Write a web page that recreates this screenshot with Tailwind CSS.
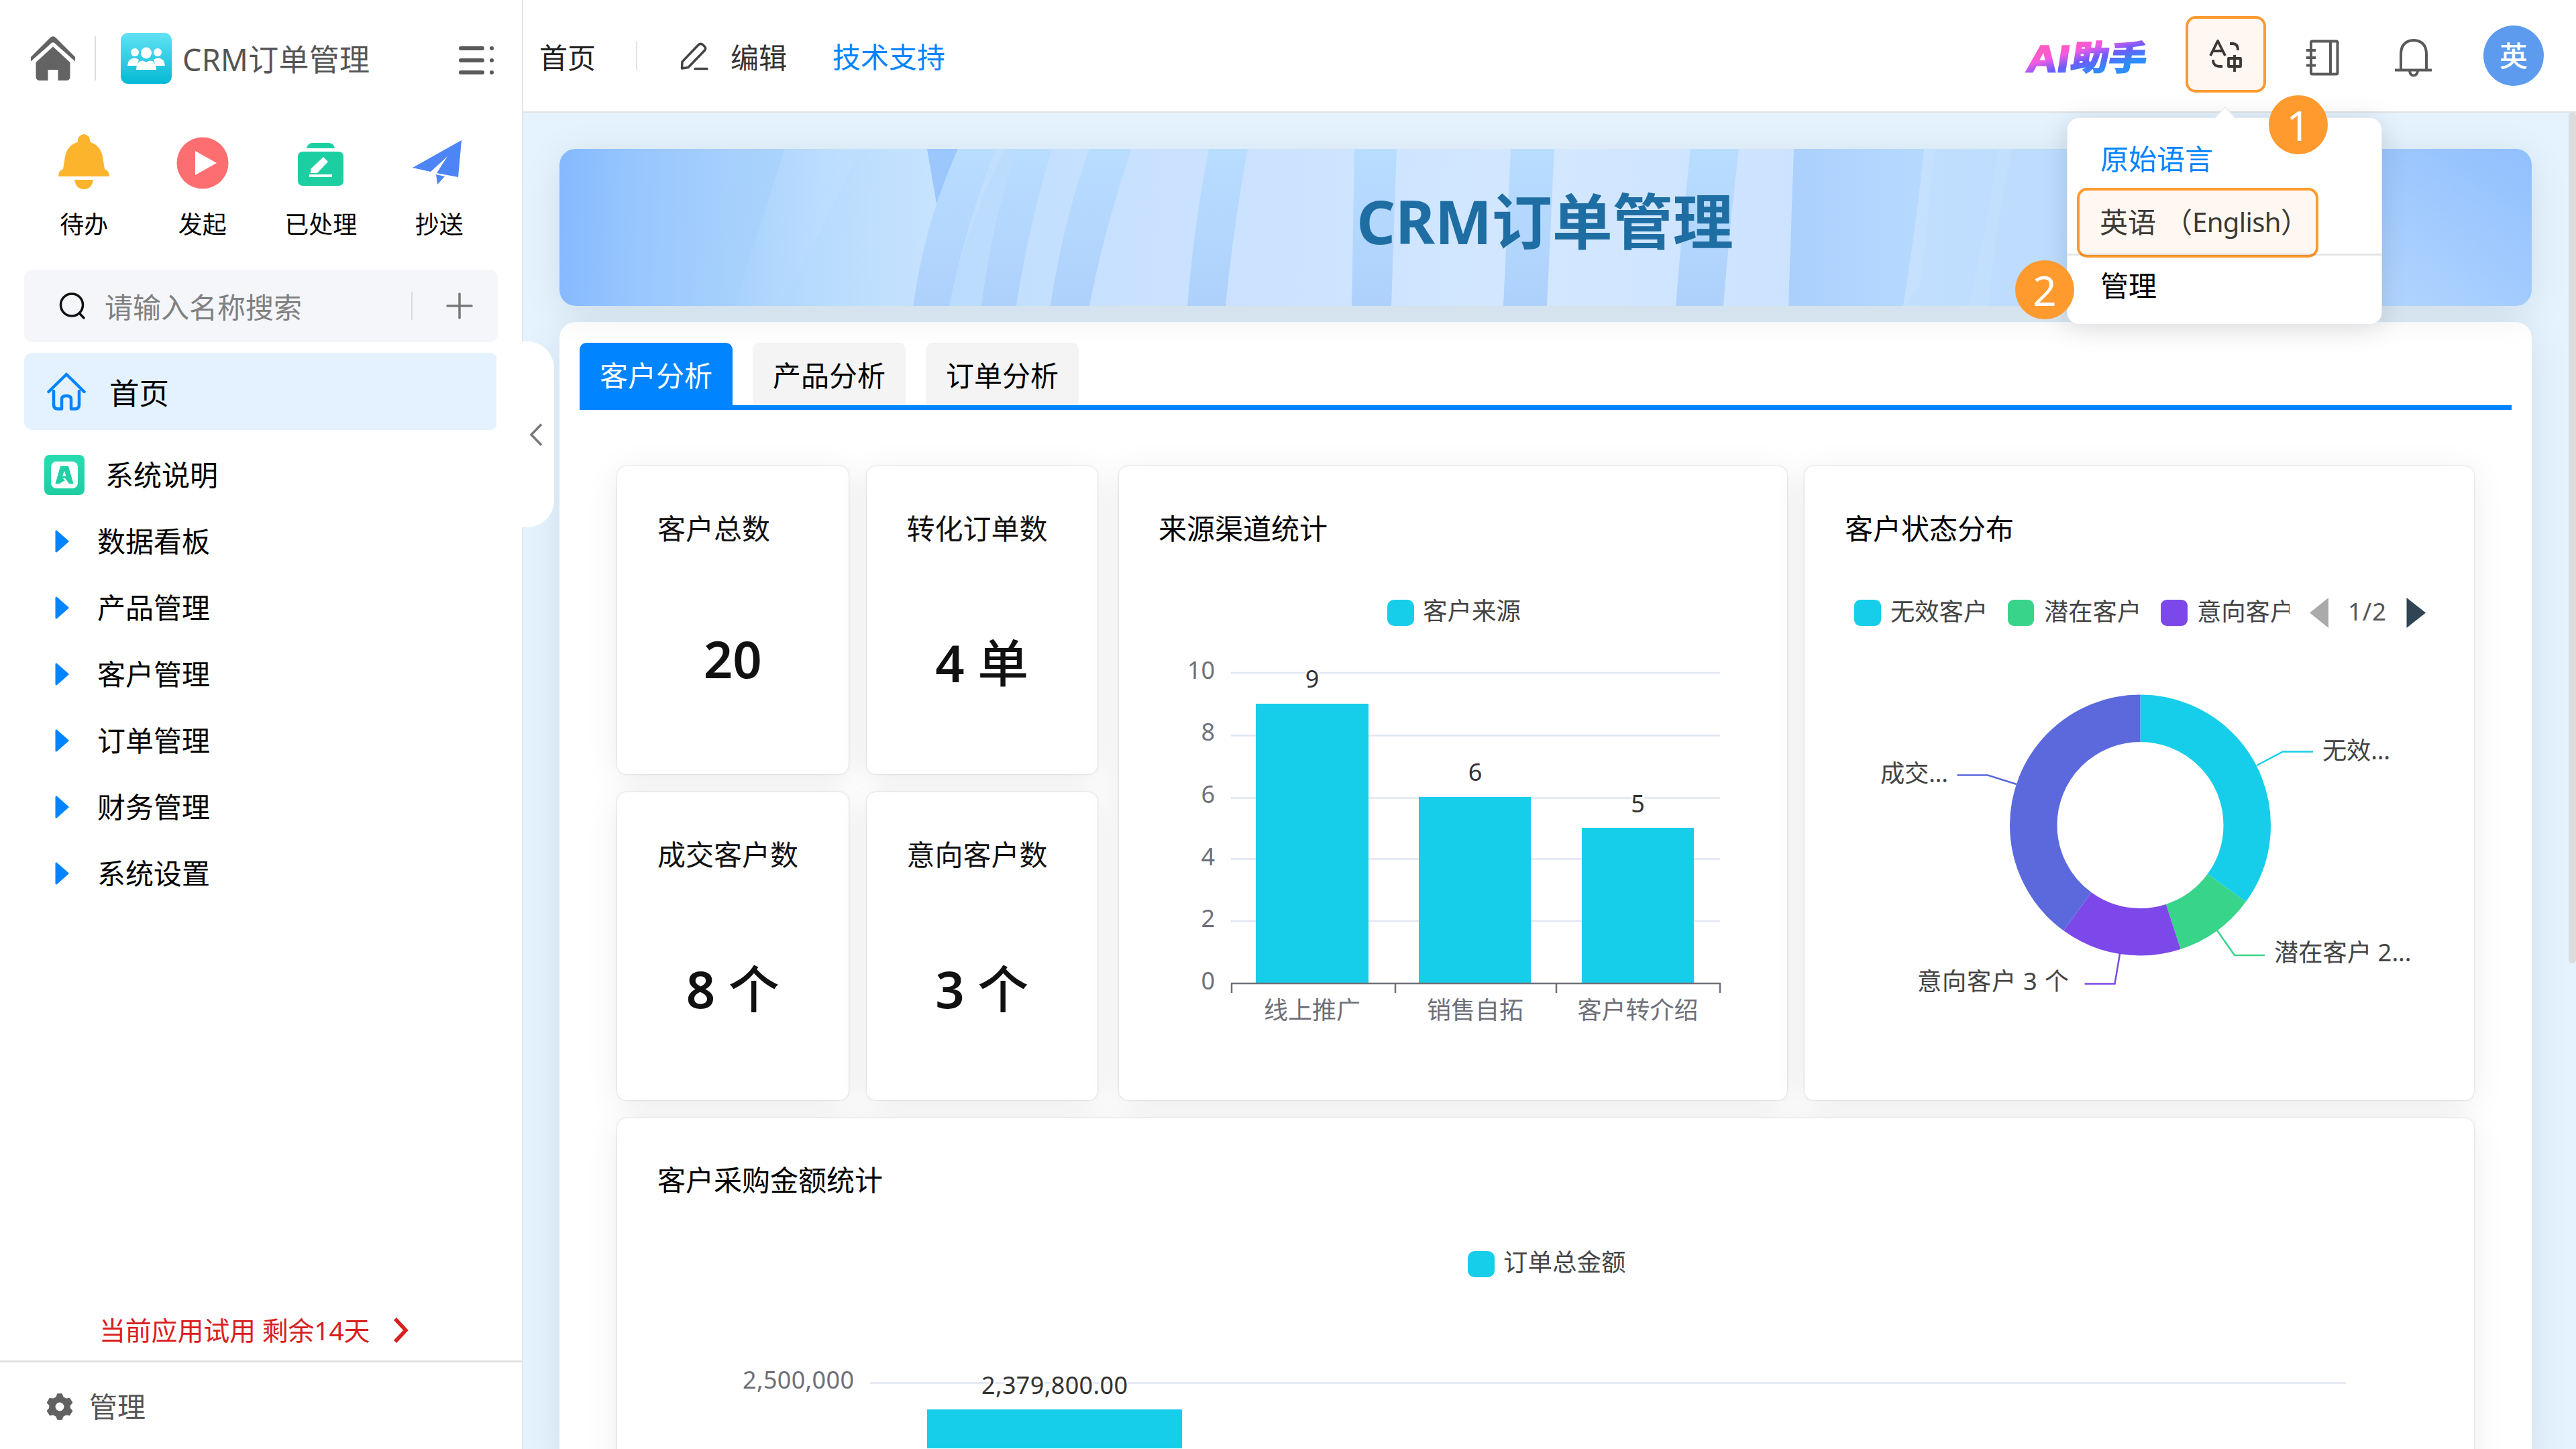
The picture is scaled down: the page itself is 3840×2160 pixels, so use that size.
<!DOCTYPE html>
<html lang="zh-CN">
<head>
<meta charset="utf-8">
<title>CRM订单管理</title>
<script src="https://cdn.jsdelivr.net/npm/@tailwindcss/browser@4"></script>
</head>
<body class="relative flex w-[3840px] h-[2160px] overflow-hidden bg-white text-[42px] leading-[56px] text-black font-['Noto_Sans','Noto_Sans_CJK_SC',sans-serif]">

<!-- Sidebar -->
<aside class="relative z-10 flex flex-col shrink-0 w-[780px] h-full bg-white border-r-2 border-[#e4e4e4]">
  <div class="flex items-center h-[168px] pt-[6px] pl-[46px] pr-[42px] shrink-0">
    <svg class="w-[66px] h-[66px]" viewBox="0 0 66 66"><path d="M0 37.500V31L28.500 2.500Q33 -2 37.500 2.500L66 31V37.500L35 10Q33 8.500 31 10Z" fill="#636363"/><path d="M33 15.500 58.500 39V60Q58.500 66 52.500 66H40.500V50H25.500V66H13.500Q7.500 66 7.500 60V39Z" fill="#636363"/></svg>
    <div class="w-[2px] h-[66px] ml-[29px] bg-[#dcdcdc]"></div>
    <svg class="w-[76px] h-[76px] ml-[37px]" viewBox="0 0 76 76"><defs><linearGradient id="lg" x1="0" y1="0" x2="0" y2="1"><stop offset="0" stop-color="#62e2f4"/><stop offset="1" stop-color="#05b9d4"/></linearGradient></defs><rect width="76" height="76" rx="11" fill="url(#lg)"/><g fill="#fff"><circle cx="21" cy="29" r="6"/><circle cx="55" cy="29" r="6"/><ellipse cx="38" cy="30" rx="8" ry="8.500"/><path d="M10 49Q11 38 20 37.500 24 37.500 27 40L24 49ZM66 49Q65 38 56 37.500 52 37.500 49 40L52 49Z"/><path d="M23 55Q24 41 33 41.500L38 43.500 43 41.500Q52 41 53 55Z"/></g></svg>
    <div class="ml-[16px] mt-[4px] text-[45px] tracking-[0.3px] text-[#555]">CRM订单管理</div>
    <svg class="w-[52px] h-[44px] ml-auto mt-[6px]" viewBox="0 0 52 44" stroke="#5a5a5a" stroke-width="6" stroke-linecap="round"><path d="M3 4H35M3 22H35M3 40H35M49 4h.1M49 22h.1M49 40h.1"/></svg>
  </div>

  <div class="grid grid-cols-4 w-[706px] ml-[37px] mt-[32px] shrink-0 text-[36px] leading-[42px] text-center">
    <div class="flex flex-col items-center gap-[30px]">
      <svg class="w-[84px] h-[84px]" viewBox="0 0 84 84" fill="#fbb42c"><path d="M42 0Q51 1 51.500 12 69 17 71 40L73 52Q80 55 80 63H4Q4 55 11 52L13 40Q15 17 32.500 12 33 1 42 0ZM28 68H56Q54 82 42 82 30 82 28 68Z"/></svg>
      <div>待办</div>
    </div>
    <div class="flex flex-col items-center gap-[30px]">
      <svg class="w-[84px] h-[84px]" viewBox="0 0 84 84"><circle cx="42" cy="43" r="38.500" fill="#fd6e70"/><path d="M31 25V61L63 43Z" fill="#fff"/></svg>
      <div>发起</div>
    </div>
    <div class="flex flex-col items-center gap-[30px]">
      <svg class="w-[84px] h-[84px]" viewBox="0 0 84 84"><path d="M21 21Q23 13 30 13H54Q61 13 63 21ZM16 26H68Q76 26 76 34V69Q76 77 68 77H16Q8 77 8 69V34Q8 26 16 26Z" fill="#1ccfa2"/><path d="M46 34 53 41 37 58H27V52ZM25 60H59V64H25Z" fill="#fff"/></svg>
      <div>已处理</div>
    </div>
    <div class="flex flex-col items-center gap-[30px]">
      <svg class="w-[84px] h-[84px]" viewBox="0 0 84 84" fill="#4d85f7"><path d="M75 9 2 50 29 56 54 33 38 58 70 64ZM37 60 50 63 39 75Z"/></svg>
      <div>抄送</div>
    </div>
  </div>

  <div class="flex items-center w-[706px] h-[108px] ml-[36px] mt-[46px] pl-[51px] pr-[37px] shrink-0 rounded-[12px] bg-[#f4f6fa]">
    <svg class="w-[42px] h-[42px]" viewBox="0 0 42 42" fill="none" stroke="#111" stroke-width="3.500"><circle cx="20" cy="19.500" r="16.500"/><path d="M31 31.500 38 39" stroke-linecap="round"/></svg>
    <div class="ml-[27px] mt-[3px] text-[42px] text-[#808080]">请输入名称搜索</div>
    <div class="w-[2px] h-[42px] ml-auto bg-[#dcdcdc]"></div>
    <svg class="w-[40px] h-[40px] ml-[50px]" viewBox="0 0 40 40" stroke="#777" stroke-width="3.500" stroke-linecap="round"><path d="M2 20H38M20 2V38"/></svg>
  </div>

  <div class="flex items-center w-[706px] h-[115px] ml-[36px] mt-[16px] pl-[34px] shrink-0 rounded-[12px] bg-[#e3f2fe]">
    <svg class="w-[58px] h-[58px]" viewBox="0 0 58 58" fill="none" stroke="#0084ff" stroke-width="4.500" stroke-linecap="round" stroke-linejoin="round"><path d="M2.500 29 29 3 55.500 29M10 28V48Q10 54.500 16 54.500H22V40Q22 35 29 35 36 35 36 40V54.500H42Q48 54.500 48 48V28"/></svg>
    <div class="ml-[35px] mt-[5px] text-[44.500px]">首页</div>
  </div>

  <nav class="flex flex-col mt-[17px] shrink-0">
    <div class="flex items-center h-[99px] pl-[66px]">
      <svg class="w-[60px] h-[60px]" viewBox="0 0 60 60"><defs><linearGradient id="ag" x1="0" y1="0" x2="0" y2="1"><stop offset="0" stop-color="#28dcb0"/><stop offset="1" stop-color="#1fcda4"/></linearGradient></defs><rect width="60" height="60" rx="8" fill="url(#ag)"/><rect x="10" y="10" width="40" height="40" rx="8" fill="#fff"/><path d="M24 17H36L43.500 43H37L31 35H27.500L31 38 22.500 43H16.500ZM30 24 27 32H32.500Z" fill="#1fd0a5"/></svg>
      <div class="ml-[31px]">系统说明</div>
    </div>
    <div class="flex items-center h-[99px] pl-[82px] gap-[42px]"><svg class="w-[21px] h-[34px]" viewBox="0 0 21 34"><path d="M2 2 19 17 2 32Z" fill="#0084ff" stroke="#0084ff" stroke-width="3" stroke-linejoin="round"/></svg><div>数据看板</div></div>
    <div class="flex items-center h-[99px] pl-[82px] gap-[42px]"><svg class="w-[21px] h-[34px]" viewBox="0 0 21 34"><path d="M2 2 19 17 2 32Z" fill="#0084ff" stroke="#0084ff" stroke-width="3" stroke-linejoin="round"/></svg><div>产品管理</div></div>
    <div class="flex items-center h-[99px] pl-[82px] gap-[42px]"><svg class="w-[21px] h-[34px]" viewBox="0 0 21 34"><path d="M2 2 19 17 2 32Z" fill="#0084ff" stroke="#0084ff" stroke-width="3" stroke-linejoin="round"/></svg><div>客户管理</div></div>
    <div class="flex items-center h-[99px] pl-[82px] gap-[42px]"><svg class="w-[21px] h-[34px]" viewBox="0 0 21 34"><path d="M2 2 19 17 2 32Z" fill="#0084ff" stroke="#0084ff" stroke-width="3" stroke-linejoin="round"/></svg><div>订单管理</div></div>
    <div class="flex items-center h-[99px] pl-[82px] gap-[42px]"><svg class="w-[21px] h-[34px]" viewBox="0 0 21 34"><path d="M2 2 19 17 2 32Z" fill="#0084ff" stroke="#0084ff" stroke-width="3" stroke-linejoin="round"/></svg><div>财务管理</div></div>
    <div class="flex items-center h-[99px] pl-[82px] gap-[42px]"><svg class="w-[21px] h-[34px]" viewBox="0 0 21 34"><path d="M2 2 19 17 2 32Z" fill="#0084ff" stroke="#0084ff" stroke-width="3" stroke-linejoin="round"/></svg><div>系统设置</div></div>
  </nav>

  <div class="flex items-center h-[90px] mt-auto pl-[148px] pb-[1px] text-[39px] text-[#d9201f]">
    <div class="w-[404px] whitespace-nowrap tracking-[-0.2px]">当前应用试用 剩余14天</div>
    <svg class="w-[24px] h-[38px] ml-[34px]" viewBox="0 0 24 38" fill="none" stroke="#d9201f" stroke-width="5.500"><path d="M3 2 19 19 3 36"/></svg>
  </div>
  <div class="flex items-center h-[132px] pl-[69px] pt-[3px] shrink-0 border-t-3 border-[#e0e0e0] text-[#555]">
    <svg class="w-[40px] h-[40px]" viewBox="0 0 40 40"><path fill-rule="evenodd" fill="#616161" stroke="#616161" stroke-width="1.500" stroke-linejoin="round" d="M17 1H23L25 6 29.500 8.500 34.500 7.500 38.500 14 35 17.800V22.200L38.500 26 34.500 32.500 29.500 31.500 25 34 23 39H17L15 34 10.500 31.500 5.500 32.500 1.500 26 5 22.200V17.800L1.500 14 5.500 7.500 10.500 8.500 15 6ZM20 12.800A7.200 7.200 0 1 0 20 27.200 7.200 7.200 0 1 0 20 12.800Z"/></svg>
    <div class="ml-[24px]">管理</div>
  </div>

  <!-- Collapse handle -->
  <div class="absolute left-[740px] top-[509px] flex items-center justify-end w-[86px] h-[277px] pr-[17px] rounded-r-[40px] bg-white">
    <svg class="w-[20px] h-[34px]" viewBox="0 0 20 34" fill="none" stroke="#777" stroke-width="3.500"><path d="M18 1.500 3 17 18 32.500"/></svg>
  </div>
</aside>

<div class="flex flex-col w-[3060px] h-full">
  <!-- Top bar -->
  <header class="flex items-center justify-between h-[168px] pl-[24px] pr-[48px] shrink-0 border-b-2 border-[#e2e2e2] bg-white">
    <div class="flex items-center pt-[6px]">
      <div class="text-[#222]">首页</div>
      <div class="w-[2px] h-[42px] ml-[60px] mb-[6px] bg-[#e2e2ea]"></div>
      <svg class="w-[42px] h-[42px] ml-[64px] mb-[4px]" viewBox="0 0 42 42" fill="none" stroke="#444" stroke-width="3.500" stroke-linejoin="round" stroke-linecap="round"><path d="M27 4Q30 1 33.500 3.500L36 6Q39 9 36.500 12L12 37.500 2.500 39 3 29ZM22 39.500H40"/></svg>
      <div class="ml-[33px] text-[#333]">编辑</div>
      <div class="ml-[68px] mb-[3px] text-[#0084ff]">技术支持</div>
    </div>
    <div class="flex items-center">
      <svg class="w-[200px] h-[80px] mt-[10px] overflow-visible" viewBox="3008 48 200 80"><defs><linearGradient id="ai" gradientUnits="userSpaceOnUse" x1="74" y1="-42" x2="88" y2="5"><stop offset="0" stop-color="#ff5ac6"/><stop offset=".2" stop-color="#f25ae4"/><stop offset=".58" stop-color="#6a5cff"/><stop offset="1" stop-color="#2e8dff"/></linearGradient></defs><g transform="translate(3019 107) skewX(-9)" fill="url(#ai)" stroke="url(#ai)" stroke-width="2.500" font-weight="700"><text x="0" y="0" font-size="56" font-family="Liberation Sans, sans-serif" textLength="63" lengthAdjust="spacingAndGlyphs">AI</text><text x="66" y="-3" font-size="50" stroke-width="2.500" textLength="112" lengthAdjust="spacingAndGlyphs">助手</text></g></svg>
      <div class="flex items-center justify-center w-[120px] h-[114px] ml-[50px] mb-[4px] rounded-[15px] border-4 border-[#ff9a2e] bg-[#fff8f2]">
        <svg class="w-[50px] h-[50px] mt-[3px]" viewBox="0 0 50 50" fill="none" stroke="#3c3733" stroke-width="3.800" stroke-linejoin="round"><path d="M2 25 13 3 24 25M6 18H20M31 7H35Q43 7 43 17M6 31Q6 41 16 41H20M29 29H47V41H29ZM38 24V49"/></svg>
      </div>
      <svg class="w-[60px] h-[60px] ml-[54px] mt-[5px]" viewBox="0 0 60 60" fill="none" stroke="#5a5a5a" stroke-width="4"><path d="M13 12V7.500Q13 5.500 15 5.500H50.500Q52.500 5.500 52.500 7.500V52.500Q52.500 54.500 50.500 54.500H15Q13 54.500 13 52.500V12M42 6V54M6 19H20M6 30H20M6 41.500H20"/></svg>
      <svg class="w-[60px] h-[60px] ml-[75px] mt-[5px]" viewBox="0 0 60 60" fill="none" stroke="#5a5a5a" stroke-width="4"><path d="M12 48V25Q12 5 31 4 50 5 50 25V48M3 48.500H58M25 50Q26 56.500 31 56.500 36 56.500 37 50"/></svg>
      <div class="flex items-center justify-center w-[90px] h-[90px] ml-[75px] rounded-full bg-[#5c9bee] text-[42px] font-medium text-white">英</div>
    </div>
  </header>

  <!-- Page body -->
  <main class="flex flex-col gap-[24px] h-[1992px] pl-[54px] pr-[66px] pt-[54px] overflow-hidden bg-[#e4f3fe]">
    <div class="relative flex items-center justify-center h-[234px] shrink-0 rounded-[24px] shadow-[0_10px_60px_rgba(0,0,0,0.09)]">
      <svg class="absolute inset-0 w-full h-full rounded-[24px]" viewBox="0 0 2940 234" preserveAspectRatio="none">
        <defs>
          <linearGradient id="bb" gradientUnits="userSpaceOnUse" x1="0" y1="0" x2="2940" y2="90"><stop offset="0" stop-color="#84b9fe"/><stop offset=".035" stop-color="#96c5fe"/><stop offset=".08" stop-color="#a4cefd"/><stop offset=".13" stop-color="#b4dafd"/><stop offset=".18" stop-color="#bedefe"/><stop offset=".3" stop-color="#c9e1ff"/><stop offset=".5" stop-color="#d3e7ff"/><stop offset=".62" stop-color="#cde3ff"/><stop offset=".7" stop-color="#c0defe"/><stop offset=".88" stop-color="#b5d7fe"/><stop offset="1" stop-color="#a9d0ff"/></linearGradient>
          <linearGradient id="bs" x1="0" y1="0" x2="0" y2="1"><stop offset="0" stop-color="#b9ddff"/><stop offset="1" stop-color="#aed1fc"/></linearGradient>
          <linearGradient id="bl" x1="0" x2="1"><stop offset="0" stop-color="#bcdffd" stop-opacity="0"/><stop offset="1" stop-color="#c8e4ff" stop-opacity=".8"/></linearGradient>
          <linearGradient id="bm" x1="0" x2="1"><stop offset="0" stop-color="#bcdcff" stop-opacity="0"/><stop offset="1" stop-color="#c3e1ff" stop-opacity=".7"/></linearGradient>
          <linearGradient id="bc" x1="1" y1="0" x2=".4" y2="1"><stop offset="0" stop-color="#8cbcfd" stop-opacity=".8"/><stop offset="1" stop-color="#8cbcfd" stop-opacity="0"/></linearGradient>
          <linearGradient id="br"><stop offset="0" stop-color="#abd0fd"/><stop offset="1" stop-color="#b6d9ff"/></linearGradient>
        </defs>
        <rect width="2940" height="234" fill="url(#bb)"/>
        <path d="M268 0H336Q296 120 262 234H196Q240 120 268 0Z" fill="#a3d0fb" opacity=".3"/>
        <path d="M336 0H448Q398 110 328 234H262Q296 120 336 0Z" fill="url(#bm)"/>
        <path d="M448 0H548L562 81Q538 150 527 234H328Q398 110 448 0Z" fill="url(#bl)"/>
        <path d="M548 0H594L562 81Z" fill="#9cc7fd"/>
        <path d="M594 0H650Q604 120 581 234H527Q548 100 594 0Z" fill="url(#bs)"/>
        <path d="M664 0H681Q640 120 629 234H581Q604 120 664 0Z" fill="#b9dafe" opacity=".7"/>
        <path d="M681 0H734Q698 120 681 234H629Q644 110 681 0Z" fill="url(#bs)"/>
        <path d="M790 0H853Q812 120 790 234H732Q750 110 790 0Z" fill="url(#bs)"/>
        <path d="M968 0H1026Q1004 120 993 234H936Q946 110 968 0Z" fill="url(#bs)"/>
        <path d="M1185 0H1248L1240 234H1181Z" fill="url(#bs)"/>
        <path d="M1418 0H1483L1472 234H1407Z" fill="url(#bs)"/>
        <path d="M1686 0H1758Q1744 120 1735 234H1664Q1674 110 1686 0Z" fill="url(#bs)"/>
        <path d="M1840 0H2034Q2022 120 2003 234H1832Z" fill="url(#br)"/>
        <path d="M2034 0H2050Q2040 100 2030 200L2003 234Q2022 120 2034 0Z" fill="#cbe4ff" opacity=".4"/>
        <path d="M2145 0H2165Q2140 120 2130 234H2100Q2130 110 2145 0Z" fill="#d2e7ff" opacity=".25"/>
        <rect x="2640" width="300" height="234" fill="url(#bc)"/>
      </svg>
      <h1 class="relative right-[1px] pb-[20px] text-[90px] leading-[110px] font-bold text-[#1f6ea3]">CRM订单管理</h1>
    </div>

    <section class="h-[1700px] shrink-0 px-[30px] pt-[31px] rounded-t-[24px] bg-white shadow-[0_10px_60px_rgba(0,0,0,0.09)]">
      <div class="flex gap-[30px] border-b-[7px] border-[#0084ff]">
        <div class="w-[228px] h-[93px] pt-[21px] rounded-t-[10px] bg-[#0084ff] text-center text-white">客户分析</div>
        <div class="w-[228px] h-[93px] pt-[21px] rounded-t-[10px] bg-[#f4f4f4] text-center">产品分析</div>
        <div class="w-[228px] h-[93px] pt-[21px] rounded-t-[10px] bg-[#f4f4f4] text-center">订单分析</div>
      </div>

      <div class="flex flex-col gap-[27px] pl-[56px] pr-[56px] pt-[84px]">
        <div class="flex h-[945px]">
          <div class="grid grid-cols-2 grid-rows-2 gap-[27px] w-[716px] text-[#111]">
            <div class="pt-[65px] rounded-[14px] bg-white shadow-[0_0_3px_rgba(0,0,0,0.18),0_8px_50px_rgba(0,0,0,0.08)]">
              <div class="pl-[60px]">客户总数</div>
              <div class="mt-[116px] text-center text-[76px] leading-[100px] font-semibold">20</div>
            </div>
            <div class="pt-[65px] rounded-[14px] bg-white shadow-[0_0_3px_rgba(0,0,0,0.18),0_8px_50px_rgba(0,0,0,0.08)]">
              <div class="pl-[60px]">转化订单数</div>
              <div class="mt-[122px] text-center text-[76px] leading-[100px] font-semibold">4 <span class="font-medium">单</span></div>
            </div>
            <div class="pt-[65px] rounded-[14px] bg-white shadow-[0_0_3px_rgba(0,0,0,0.18),0_8px_50px_rgba(0,0,0,0.08)]">
              <div class="pl-[60px]">成交客户数</div>
              <div class="mt-[122px] text-center text-[76px] leading-[100px] font-semibold">8 <span class="font-medium">个</span></div>
            </div>
            <div class="pt-[65px] rounded-[14px] bg-white shadow-[0_0_3px_rgba(0,0,0,0.18),0_8px_50px_rgba(0,0,0,0.08)]">
              <div class="pl-[60px]">意向客户数</div>
              <div class="mt-[122px] text-center text-[76px] leading-[100px] font-semibold">3 <span class="font-medium">个</span></div>
            </div>
          </div>

          <div class="w-[996px] ml-[32px] pt-[65px] rounded-[14px] bg-white shadow-[0_0_3px_rgba(0,0,0,0.18),0_8px_50px_rgba(0,0,0,0.08)]">
            <div class="pl-[59px]">来源渠道统计</div>
            <svg class="w-[996px] h-[824px]" viewBox="1668 816 996 824" font-size="36">
              <rect x="2068" y="894" width="40" height="39" rx="10" fill="#16cee9"/>
              <text x="2121" y="924" font-size="36.500" fill="#444">客户来源</text>
              <path d="M1835 1003H2564M1835 1096.500H2564M1835 1189.500H2564M1835 1280.500H2564M1835 1373H2564" stroke="#e0e6f1" stroke-width="2.500"/>
              <g fill="#6e7079" text-anchor="end"><text x="1811" y="1012">10</text><text x="1811" y="1104">8</text><text x="1811" y="1197">6</text><text x="1811" y="1290">4</text><text x="1811" y="1382">2</text><text x="1811" y="1475">0</text></g>
              <g fill="#16cee9"><path d="M1872 1049H2040V1465H1872ZM2115 1188H2282V1465H2115ZM2358 1234H2525V1465H2358Z"/></g>
              <path d="M1835 1466H2565M1836 1466V1480M2080 1466V1480M2320 1466V1480M2564 1466V1480" stroke="#6e7079" stroke-width="2.500"/>
              <g fill="#333" text-anchor="middle" stroke="#fff" stroke-width="5" paint-order="stroke"><text x="1956" y="1025">9</text><text x="2199" y="1164">6</text><text x="2441.500" y="1211">5</text></g>
              <g fill="#6e7079" text-anchor="middle"><text x="1956" y="1519">线上推广</text><text x="2199" y="1519">销售自拓</text><text x="2441.500" y="1519">客户转介绍</text></g>
            </svg>
          </div>

          <div class="w-[998px] ml-[26px] pt-[65px] rounded-[14px] bg-white shadow-[0_0_3px_rgba(0,0,0,0.18),0_8px_50px_rgba(0,0,0,0.08)]">
            <div class="pl-[60px]">客户状态分布</div>
            <svg class="w-[998px] h-[824px]" viewBox="2690 816 998 824" font-size="36.300" fill="#444">
              <defs><clipPath id="cut"><rect x="3270" y="880" width="143" height="60"/></clipPath></defs>
              <rect x="2764" y="894" width="40" height="39" rx="9" fill="#16cee9"/><text x="2818" y="925">无效客户</text>
              <rect x="2993" y="894" width="39" height="39" rx="9" fill="#38d48a"/><text x="3047" y="925">潜在客户</text>
              <rect x="3221" y="894" width="40" height="39" rx="9" fill="#7d48ea"/><text x="3275" y="925" clip-path="url(#cut)">意向客户</text>
              <path d="M3471 891V936L3443 913.500Z" fill="#aaa"/>
              <text x="3500" y="925" fill="#555" textLength="57">1/2</text>
              <path d="M3587.500 891V936L3616 913.500Z" fill="#2f4554"/>
              <g fill="none" stroke-width="70.500" transform="rotate(-90 3190.500 1230)">
                <circle cx="3190.500" cy="1230" r="159.250" pathLength="20" stroke="#16cee9" stroke-dasharray="7 13"/>
                <circle cx="3190.500" cy="1230" r="159.250" pathLength="20" stroke="#38d48a" stroke-dasharray="2 18" stroke-dashoffset="-7"/>
                <circle cx="3190.500" cy="1230" r="159.250" pathLength="20" stroke="#7d48ea" stroke-dasharray="3 17" stroke-dashoffset="-9"/>
                <circle cx="3190.500" cy="1230" r="159.250" pathLength="20" stroke="#5b69dd" stroke-dasharray="8 12" stroke-dashoffset="-12"/>
              </g>
              <g fill="none" stroke-width="2.500">
                <path d="M3364 1141 3403 1120.500H3448" stroke="#16cee9"/>
                <path d="M3305 1387 3331 1424H3376" stroke="#38d48a"/>
                <path d="M3160 1422 3152.500 1466.500H3107.500" stroke="#7d48ea"/>
                <path d="M3006 1169 2963 1155.500H2917.500" stroke="#5b69dd"/>
              </g>
              <text x="3462" y="1132" textLength="101">无效...</text>
              <text x="3390" y="1433">潜在客户 2...</text>
              <text x="2858" y="1476" textLength="226">意向客户 3 个</text>
              <text x="2803" y="1166" textLength="101">成交...</text>
            </svg>
          </div>
        </div>

        <div class="h-[700px] pt-[64px] rounded-[14px] bg-white shadow-[0_0_3px_rgba(0,0,0,0.18),0_8px_50px_rgba(0,0,0,0.08)]">
          <div class="pl-[60px]">客户采购金额统计</div>
          <svg class="w-[2768px] h-[372px]" viewBox="920 1788 2768 372" font-size="36">
            <rect x="2188" y="1866" width="40" height="39" rx="10" fill="#16cee9"/>
            <text x="2241" y="1896" font-size="36.500" fill="#444">订单总金额</text>
            <path d="M1297 2062.500H3497" stroke="#e0e6f1" stroke-width="2.500"/>
            <text x="1273" y="2071" text-anchor="end" fill="#6e7079" textLength="166">2,500,000</text>
            <rect x="1382" y="2102" width="380" height="60" fill="#16cee9"/>
            <text x="1572" y="2079" text-anchor="middle" fill="#333" stroke="#fff" stroke-width="5" paint-order="stroke" textLength="218">2,379,800.00</text>
          </svg>
        </div>
      </div>
    </section>
  </main>
</div>

<!-- Scrollbar thumb -->
<div class="absolute left-[3829px] top-[168px] w-[11px] h-[1268px] rounded-[5px] bg-[#dadcde]"></div>

<!-- Language menu -->
<div class="absolute z-20 left-[3081px] top-[175px] w-[470px] h-[309px] pt-[20px] rounded-[18px] border border-[#e6e9f0] bg-white shadow-[0_4px_40px_rgba(0,0,0,0.13)] text-[#222]">
  <svg class="absolute left-[217px] top-[-18px] w-[38px] h-[20px]" viewBox="0 0 38 20"><path d="M1 19.500 18 1.500 35 19.500" fill="#fff" stroke="#e6e9f0" stroke-width="1.500"/><path d="M2 18.500H34V20H2Z" fill="#fff"/></svg>
  <div class="flex items-center h-[84px] pb-[2px] pl-[49px] text-[#0084ff]">原始语言</div>
  <div class="flex items-center w-[360px] h-[104px] ml-[14px] pb-[2px] pl-[30px] rounded-[15px] border-4 border-[#ff9a2e] bg-[#fff8f2] text-[#3d3935] whitespace-pre">英语<span class="ml-[12px]">（</span><span class="inline-block w-[132px] text-[40px] tracking-[-0.6px]">English</span><span>）</span></div>
  <div class="absolute left-0 top-[202px] w-full h-[3px] bg-black/10"></div>
  <div class="flex items-center h-[84px] pl-[49px] text-black">管理</div>
</div>
<div class="absolute z-30 left-[3382px] top-[142px] flex items-center justify-center w-[88px] h-[88px] rounded-full bg-[#ff9a2e] text-[62px] text-white">1</div>
<div class="absolute z-30 left-[3004px] top-[388px] flex items-center justify-center w-[88px] h-[88px] rounded-full bg-[#ff9a2e] text-[62px] text-white">2</div>
</body>
</html>
